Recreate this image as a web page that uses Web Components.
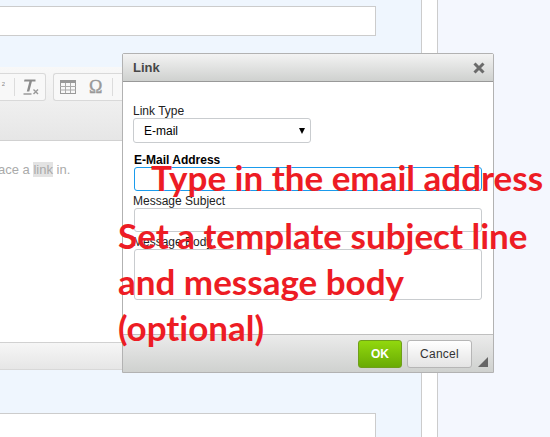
<!DOCTYPE html>
<html lang="en">
<head>
<meta charset="utf-8">
<title>Link dialog</title>
<style>
html, body { margin: 0; height: 100%; overflow: hidden; background: #f4f7fe; }
body { font: 12px "Liberation Sans", Arial, sans-serif; }
</style>
</head>
<body>
<page-shell>
    <text-box slot="main" style="height:28px"></text-box>
    <cke-editor slot="main"></cke-editor>
    <text-box slot="main" style="height:40px;margin-top:43px"></text-box>
    <link-dialog slot="over">
        <dialog-field label="Link Type" kind="select" value="E-mail" style="margin-top:22px"></dialog-field>
        <dialog-field label="E-Mail Address" kind="focus" bold style="margin-top:10px"></dialog-field>
        <dialog-field label="Message Subject" kind="input" style="margin-top:3px"></dialog-field>
        <dialog-field label="Message Body" kind="area" style="margin-top:3px"></dialog-field>
    </link-dialog>
    <call-out slot="over" style="left:151px;top:154px">Type in the email address</call-out>
    <call-out slot="over" style="left:118px;top:212px">Set a template subject line<br>and message body<br>(optional)</call-out>
</page-shell>

<script>
class PageShell extends HTMLElement {
    constructor() {
        super();
        this.attachShadow({ mode: 'open' });
        this.shadowRoot.innerHTML = `
        <style>
        :host { display: flex; position: relative; width: 550px; height: 437px; overflow: hidden; }
        .main {
            width: 421px;
            box-sizing: content-box;
            padding-top: 6px;
            background: #eff6fe;
            border-right: 1px solid #ccc;
        }
        .gutter { width: 15px; background: #fff; border-right: 1px solid #ccc; }
        .rest { flex: 1; background: #f4f7fe; }
        </style>
        <div class="main"><slot name="main"></slot></div>
        <div class="gutter"></div>
        <div class="rest"></div>
        <slot name="over"></slot>
        `
    }
}

class TextBox extends HTMLElement {
    constructor() {
        super();
        this.attachShadow({ mode: 'open' });
        this.shadowRoot.innerHTML = `
        <style>
        :host {
            display: block;
            width: 375px;
            background: #fff;
            border: 1px solid #ccc;
            border-left: 0;
        }
        </style>
        `
    }
}

class CkeEditor extends HTMLElement {
    constructor() {
        super();
        this.attachShadow({ mode: 'open' });
        this.shadowRoot.innerHTML = `
        <style>
        :host {
            display: flex;
            flex-direction: column;
            height: 303px;
            margin-top: 31px;
            background: #fff;
            color: #aaa;
        }
        .toolbar {
            height: 74px;
            box-sizing: border-box;
            padding-top: 6px;
            display: flex;
            gap: 7px;
            align-items: flex-start;
            background: linear-gradient(#f8f8f8, #e6e6e6);
            border-bottom: 1px solid #d1d1d1;
        }
        .group {
            height: 26px;
            display: flex;
            align-items: center;
            background: #f8f8f8;
            border: 1px solid #d9d9d9;
            border-radius: 3px;
        }
        .first { width: 45px; border-left: 0; border-radius: 0 3px 3px 0; box-sizing: content-box; }
        .second { flex: 1; border-right: 0; border-radius: 3px 0 0 3px; }
        .sep { width: 1px; height: 18px; background: #dcdcdc; }
        .sup { font-size: 6px; color: #888; margin-top: -7px; }
        svg { display: block; }
        .content { flex: 1; padding: 21px 0 0; font-size: 13px; white-space: nowrap; }
        .content span { margin-left: -2px; }
        mark { background: #e3e3e3; color: #aaa; }
        .foot {
            height: 26px;
            background: linear-gradient(#f6f6f6, #e6e6e6);
            border-top: 1px solid #d1d1d1;
            border-bottom: 1px solid #d8d8d8;
        }
        </style>
        <div class="toolbar">
            <div class="group first">
                <span class="sup" style="text-align:right;width:5px;overflow:hidden">2</span>
                <span style="width:9px"></span>
                <div class="sep"></div>
                <svg width="30" height="20" viewBox="0 0 30 20" style="flex:none">
                    <path d="M9.5 2.5h11v2h-3.6l-2.6 10h-2.5l2.6-10H9z" fill="#8c8c8c"/>
                    <path d="M8.5 17h8" stroke="#8c8c8c" stroke-width="1.3"/>
                    <path d="M18.5 12.5l4.5 4.5m0-4.5l-4.5 4.5" stroke="#999" stroke-width="1.4"/>
                </svg>
            </div>
            <div class="group second">
                <svg width="16" height="14" viewBox="0 0 16 14" style="margin-left:6px" fill="none">
                    <rect x=".5" y=".5" width="15" height="13" stroke="#999"/>
                    <rect x="0" y="0" width="16" height="3" fill="#999"/>
                    <path d="M5.5 3v10M10.5 3v10M0 6.5h16M0 10h16" stroke="#aaa"/>
                </svg>
                <span style="font:18px 'Liberation Serif',serif;color:#999;margin-left:13px;width:14px;-webkit-text-stroke:.4px #999">Ω</span>
                <span style="width:9px"></span>
                <div class="sep"></div>
                <svg width="5" height="12" viewBox="0 0 5 12" style="margin-left:9px" fill="none"><path d="M4 2a3 4 0 0 0 0 8" stroke="#999" stroke-width="1.5"/></svg>
            </div>
        </div>
        <div class="content"><span>ace a <mark>link</mark> in.</span></div>
        <div class="foot"></div>
        `
    }
}

class LinkDialog extends HTMLElement {
    constructor() {
        super();
        this.attachShadow({ mode: 'open' });
        this.shadowRoot.innerHTML = `
        <style>
        :host {
            position: absolute;
            left: 122px;
            top: 53px;
            width: 370px;
            height: 318px;
            display: flex;
            flex-direction: column;
            background: #fff;
            border: 1px solid #b2b2b2;
            border-radius: 2px 2px 0 0;
            color: #222;
        }
        header {
            height: 27px;
            display: flex;
            align-items: center;
            justify-content: space-between;
            padding: 0 8px 0 10px;
            background: linear-gradient(#f3f3f3, #cfd1cf);
            border-bottom: 1px solid #999;
            font-weight: bold;
            font-size: 13px;
            color: #474747;
        }
        .body { flex: 1; padding: 0 11px 0 10px; }
        footer {
            height: 38px;
            display: flex;
            gap: 5px;
            padding: 5px 20px 0 235px;
            box-sizing: border-box;
            background: linear-gradient(#ebebeb, #cfd1cf);
            border-top: 1px solid #bfbfbf;
            position: relative;
        }
        button {
            height: 28px;
            padding: 0;
            font: 12px "Liberation Sans", Arial, sans-serif;
            border-radius: 3px;
        }
        .ok {
            width: 44px;
            color: #fff;
            font-weight: bold;
            background: linear-gradient(#92d80e, #69ab04);
            border: 1px solid #6f9f1a;
        }
        .cancel {
            width: 65px;
            color: #333;
            letter-spacing: .25px;
            background: linear-gradient(#fff, #e4e4e4);
            border: 1px solid #b6b6b6;
        }
        .grip { position: absolute; right: 5px; bottom: 5px; }
        </style>
        <header>
            <span>Link</span>
            <svg width="12" height="12" viewBox="0 0 12 12"><path d="M1.5 1.5l9 9M10.5 1.5l-9 9" stroke="#6b6b6b" stroke-width="3"/></svg>
        </header>
        <div class="body"><slot></slot></div>
        <footer>
            <button class="ok">OK</button>
            <button class="cancel">Cancel</button>
            <svg class="grip" width="10" height="10" viewBox="0 0 10 10"><path d="M10 0v10H0z" fill="#666"/></svg>
        </footer>
        `
    }
}

class DialogField extends HTMLElement {
    constructor() {
        super();
        this.attachShadow({ mode: 'open' });
        this.shadowRoot.innerHTML = `
        <style>
        :host { display: block; color: #222; }
        label { display: block; height: 14px; line-height: 14px; }
        :host([bold]) label { font-weight: bold; color: #000; margin-left: 1px; }
        .box {
            box-sizing: border-box;
            margin-left: 1px;
            width: 348px;
            background: #fff;
            border: 1px solid #c9cccf;
            border-radius: 3px;
        }
        .select {
            margin-left: 0;
            width: 178px;
            height: 25px;
            display: flex;
            align-items: center;
            justify-content: space-between;
            padding: 0 5px 0 10px;
            color: #000;
        }
        .select i { border: 3.5px solid transparent; border-top: 6px solid #000; border-bottom: 0; }
        .focus { height: 24px; border-color: #1a9bec; }
        .input { height: 24px; }
        .area { height: 51px; }
        </style>
        <label></label>
        <div class="box"></div>
        `
    }

    connectedCallback() {
        const box = this.shadowRoot.querySelector('.box')
        this.shadowRoot.querySelector('label').textContent = this.getAttribute('label')
        box.classList.add(this.getAttribute('kind'))
        if(this.getAttribute('kind') === 'select') {
            box.innerHTML = `<span>${this.getAttribute('value')}</span><i></i>`
        }
    }
}

class CallOut extends HTMLElement {
    constructor() {
        super();
        this.attachShadow({ mode: 'open' });
        this.shadowRoot.innerHTML = `
        <style>
        :host {
            position: absolute;
            white-space: nowrap;
            font: bold 35px/46px Lato, "Open Sans", sans-serif;
            font-variant-ligatures: none;
            color: #ed1c24;
        }
        </style>
        <slot></slot>
        `
    }
}

customElements.define('page-shell', PageShell);
customElements.define('text-box', TextBox);
customElements.define('cke-editor', CkeEditor);
customElements.define('link-dialog', LinkDialog);
customElements.define('dialog-field', DialogField);
customElements.define('call-out', CallOut);
</script>
</body>
</html>
